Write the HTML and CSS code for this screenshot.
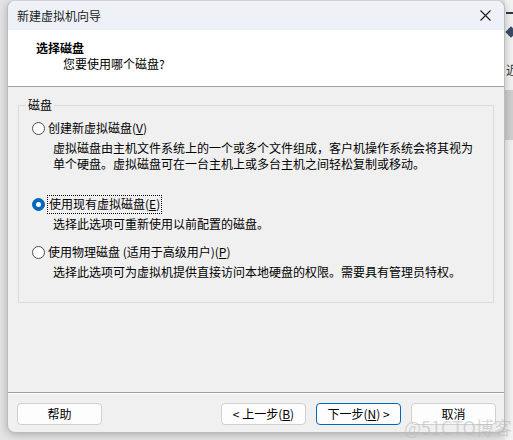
FILE: index.html
```html
<!DOCTYPE html>
<html lang="zh-CN">
<head>
  <meta charset="UTF-8">
  <title>新建虚拟机向导</title>
  <link rel="stylesheet" href="styles.css">
</head>
<body>
  <div class="screen">
    <!-- 左侧桌面 -->
    <div class="gutter-left"></div>

    <!-- 对话框 -->
    <div class="dialog">
      <div class="titlebar">
        <span class="title">新建虚拟机向导</span>
        <span class="close">
          <svg width="11" height="11" viewBox="0 0 11 11">
            <path d="M0.5 0.5 L10.5 10.5 M10.5 0.5 L0.5 10.5" stroke="#1a1a1a" stroke-width="1.1"/>
          </svg>
        </span>
      </div>

      <div class="header">
        <div class="header-title">选择磁盘</div>
        <div class="header-sub">您要使用哪个磁盘?</div>
      </div>

      <div class="content">
        <fieldset class="group">
          <legend>磁盘</legend>

          <div class="option option-first">
            <div class="option-label"><span class="radio"></span><span>创建新虚拟磁盘(<u>V</u>)</span></div>
            <div class="option-desc">虚拟磁盘由主机文件系统上的一个或多个文件组成，客户机操作系统会将其视为<br>单个硬盘。虚拟磁盘可在一台主机上或多台主机之间轻松复制或移动。</div>
          </div>

          <div class="option option-second">
            <div class="option-label"><span class="radio checked"></span><span class="focus">使用现有虚拟磁盘(<u>E</u>)</span></div>
            <div class="option-desc">选择此选项可重新使用以前配置的磁盘。</div>
          </div>

          <div class="option option-third">
            <div class="option-label"><span class="radio"></span><span>使用物理磁盘 (适用于高级用户)(<u>P</u>)</span></div>
            <div class="option-desc">选择此选项可为虚拟机提供直接访问本地硬盘的权限。需要具有管理员特权。</div>
          </div>
        </fieldset>
      </div>

      <div class="footer">
        <button class="btn">帮助</button>
        <div class="spacer"></div>
        <button class="btn">&lt; 上一步(<u>B</u>)</button>
        <button class="btn btn-default">下一步(<u>N</u>) &gt;</button>
        <button class="btn">取消</button>
      </div>
    </div>

    <!-- 右侧露出的另一个窗口 -->
    <div class="gutter-right">
      <div class="peek-dash"></div>
      <div class="peek-arrow"></div>
      <div class="peek-char">近</div>
      <div class="peek-thumb"></div>
    </div>
  </div>

  <div class="watermark">@51CTO博客</div>
</body>
</html>
```

FILE: styles.css
```css
html, body {
    margin: 0;
    padding: 0;
    width: 513px;
    height: 440px;
    overflow: hidden;
    background: #e6e6e6;
    font-family: "Noto Sans CJK SC", "Liberation Sans", sans-serif;
    font-size: 12px;
    color: #000;
}

.screen {
    display: flex;
    width: 513px;
    height: 440px;
    position: relative;
}

.gutter-left {
    width: 7px;
    background: #e4e4e4;
}

/* 对话框 */
.dialog {
    width: 496px;
    height: 431px;
    border: 1px solid #bcbcbc;
    border-top-color: #d0d0d0;
    border-radius: 8px;
    overflow: hidden;
    display: flex;
    flex-direction: column;
    background: #f0f0f0;
    box-shadow: 0 2px 8px rgba(0, 0, 0, 0.25);
    position: relative;
    z-index: 1;
}

.titlebar {
    height: 29px;
    background: #eef2f8;
    display: flex;
    align-items: center;
    padding-left: 9px;
}

.title {
    flex: 1;
    line-height: 16px;
    color: #1a1a1a;
}

.close {
    width: 30px;
    display: flex;
    justify-content: center;
    margin-right: 4px;
}

.header {
    height: 57px;
    background: #fff;
    border-bottom: 1px solid #a0a0a0;
    box-sizing: border-box;
    padding: 10px 0 0 28px;
}

.header-title {
    font-weight: bold;
    line-height: 16px;
}

.header-sub {
    line-height: 16px;
    margin-left: 27px;
}

/* 磁盘分组 */
.content {
    flex: 1;
    padding-top: 10px;
    border-bottom: 1px solid #a0a0a0;
}

.group {
    margin: 0 10px;
    padding: 0 0 22px 13px;
    border: 1px solid #dcdcdc;
    min-width: 0;
}

.group legend {
    margin-left: -6px;
    padding: 0 2px;
    line-height: 16px;
}

.option-label {
    display: flex;
    align-items: center;
    height: 18px;
    line-height: 16px;
}

.option-first { margin-top: 6px; }
.option-second { margin-top: 23px; }
.option-third { margin-top: 11px; }

.radio {
    width: 11px;
    height: 11px;
    border: 1px solid #4d4d4d;
    border-radius: 50%;
    background: #fff;
    margin-right: 3px;
    flex-shrink: 0;
    position: relative;
}

.radio.checked {
    background: #0067c0;
    border-color: #0067c0;
}

.radio.checked::after {
    content: "";
    position: absolute;
    left: 3px;
    top: 3px;
    width: 5px;
    height: 5px;
    border-radius: 50%;
    background: #fff;
}

.focus {
    outline: 1px dotted #000;
    outline-offset: 0;
    padding: 0 1px 1px 1px;
    line-height: 16px;
}

.option-desc {
    margin: 3px 0 0 21px;
    line-height: 16px;
    white-space: nowrap;
}

u {
    text-decoration-thickness: 1px;
    text-underline-offset: 1px;
}

/* 底部按钮 */
.footer {
    height: 39px;
    border-top: 1px solid #fff;
    box-sizing: border-box;
    display: flex;
    align-items: flex-start;
    gap: 10px;
    padding: 9px 8px 0 9px;
}

.spacer {
    flex: 1;
}

.btn {
    width: 85px;
    height: 22px;
    padding: 0;
    font-family: inherit;
    font-size: 12px;
    line-height: 16px;
    color: #000;
    background: #fdfdfd;
    border: 1px solid #d0d0d0;
    border-radius: 4px;
}

.btn-default {
    border-color: #0067c0;
}

/* 右侧的另一个窗口 */
.gutter-right {
    flex: 1;
    background: #f2f2f2;
    position: relative;
    overflow: hidden;
}

.peek-dash {
    position: absolute;
    left: 1px;
    top: 12px;
    width: 7px;
    height: 2px;
    background: #2b3a4e;
}

.peek-arrow {
    position: absolute;
    left: 2px;
    top: 28px;
    width: 8px;
    height: 8px;
    background: #3a4d66;
    transform: rotate(45deg);
}

.peek-char {
    position: absolute;
    left: 1px;
    top: 62px;
    font-size: 12px;
    line-height: 16px;
    color: #333;
}

.peek-thumb {
    position: absolute;
    left: 0;
    top: 90px;
    width: 8px;
    height: 50px;
    background: #cfcfcf;
}

.watermark {
    position: absolute;
    left: 404px;
    top: 417px;
    font-size: 18px;
    line-height: 21px;
    color: rgba(185, 185, 185, 0.55);
    z-index: 5;
    white-space: nowrap;
}
```
